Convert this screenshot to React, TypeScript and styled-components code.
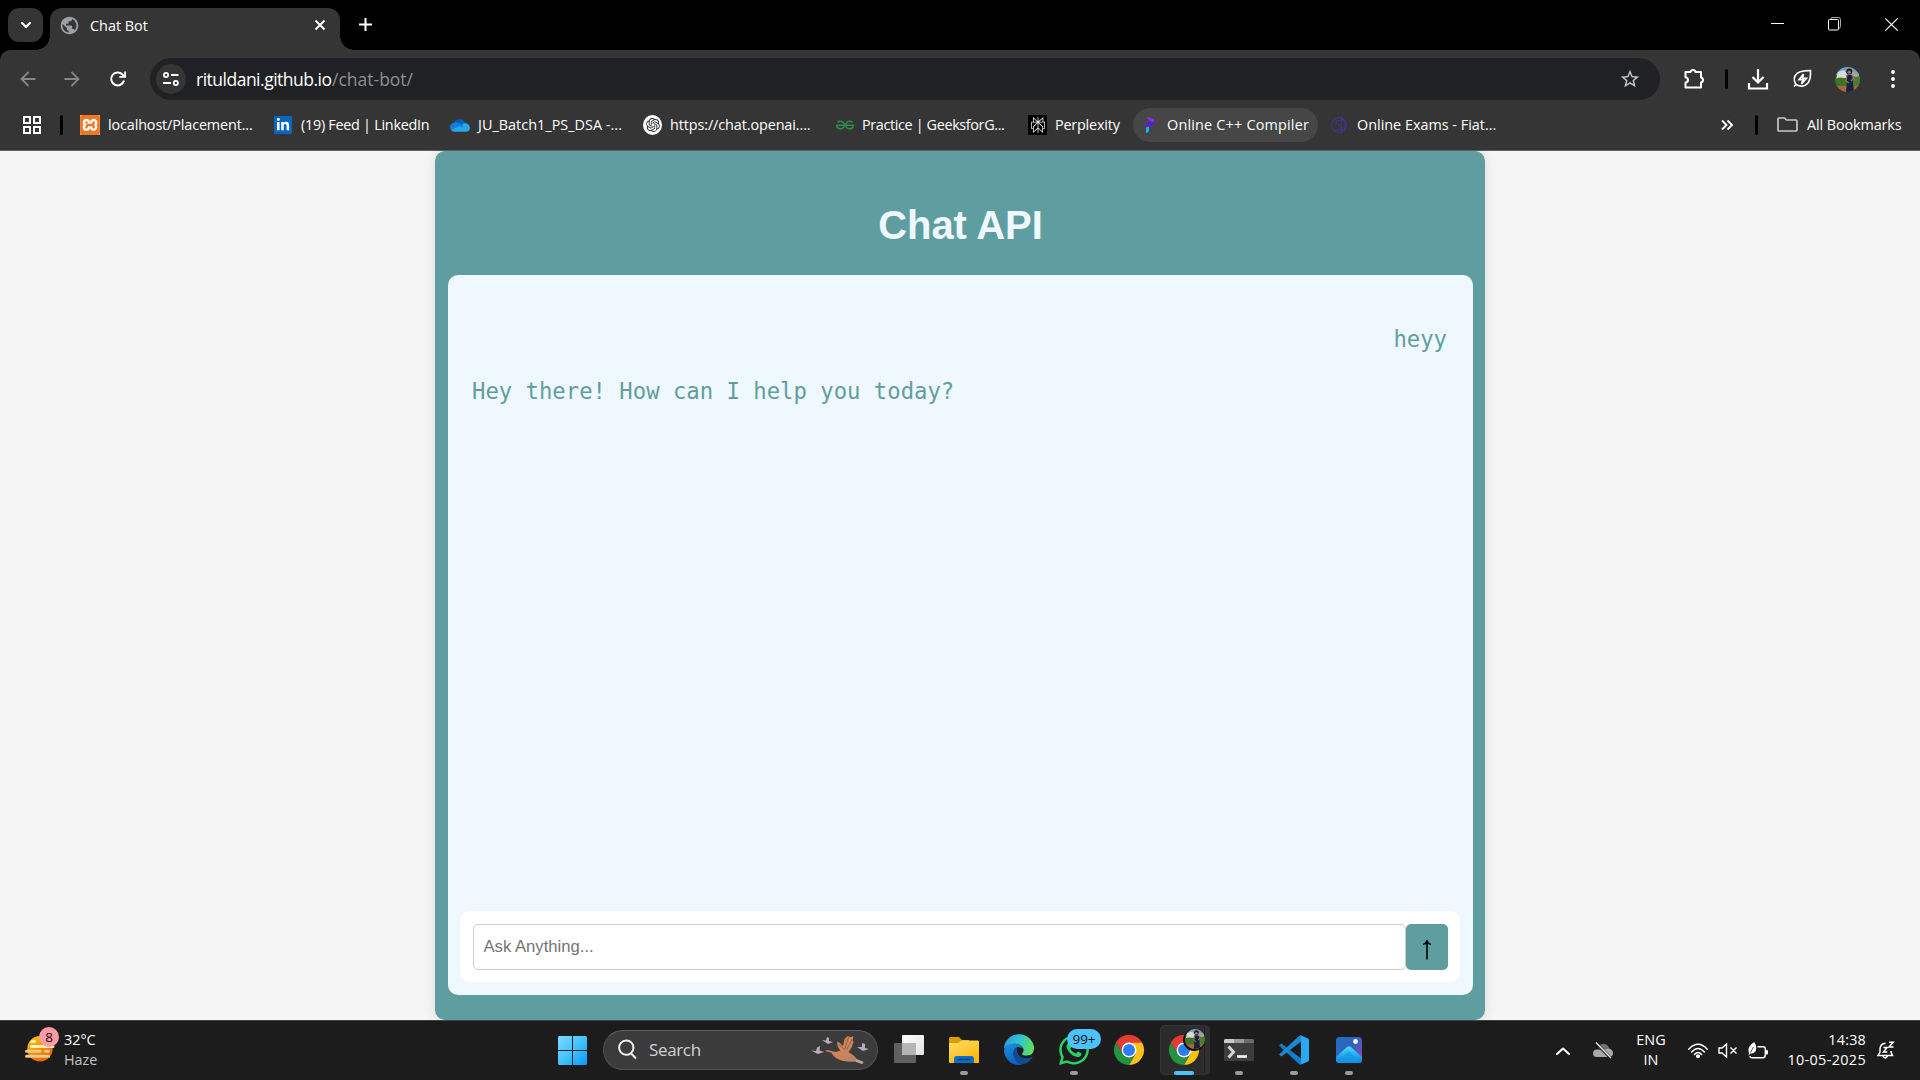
import React from "react";
import styled, { createGlobalStyle } from "styled-components";
import { SiXampp, SiOpenai, SiGeeksforgeeks, SiPerplexity } from "react-icons/si";
import { FaLinkedinIn, FaWhatsapp } from "react-icons/fa";
import { MdPublic, MdStarBorder } from "react-icons/md";

const Global = createGlobalStyle`
  * { box-sizing: border-box; }
  html, body { margin: 0; padding: 0; overflow: hidden; background: #000; }
  svg { display: block; flex: none; overflow: visible; }
`;

const ui = `"Segoe UI", "Open Sans", "Noto Sans", sans-serif`;

const Screen = styled.div`
  width: 1920px;
  height: 1080px;
  display: flex;
  flex-direction: column;
  overflow: hidden;
  font-family: ${ui};
  color: #fff;
`;

/* ---------- shared ---------- */
const Label = styled.span<{ $w?: number; $size?: number; $ls?: number; $color?: string }>`
  flex: none;
  width: ${(p) => (p.$w ? `${p.$w}px` : "auto")};
  font-size: ${(p) => p.$size ?? 14.4}px;
  letter-spacing: ${(p) => p.$ls ?? 0}px;
  color: ${(p) => p.$color ?? "#fff"};
  white-space: nowrap;
  line-height: 20px;
`;
const Slot = styled.span<{ $w: number; $ml?: number; $mr?: number }>`
  flex: none;
  width: ${(p) => p.$w}px;
  margin-left: ${(p) => p.$ml ?? 0}px;
  margin-right: ${(p) => p.$mr ?? 0}px;
  display: flex;
  align-items: center;
  justify-content: center;
`;
const Divider = styled.span<{ $ml: number }>`
  flex: none;
  width: 3px;
  height: 20px;
  border-radius: 2px;
  background: #000;
  margin-left: ${(p) => p.$ml}px;
`;

/* ---------- browser chrome ---------- */
const TabStrip = styled.div`
  height: 50px;
  flex: none;
  background: #000;
  display: flex;
  padding: 8px 0 0 8px;
`;
const TabSearch = styled.div`
  width: 35px;
  height: 34px;
  border-radius: 11px;
  background: #353535;
  display: flex;
  align-items: center;
  justify-content: center;
`;
const Tab = styled.div`
  position: relative;
  margin-left: 7px;
  width: 290px;
  height: 42px;
  border-radius: 12px 12px 0 0;
  background: #353535;
  display: flex;
  align-items: center;
  padding: 0 14px 8px 9px;
  &::before, &::after {
    content: "";
    position: absolute;
    bottom: 0;
    width: 14px;
    height: 14px;
  }
  &::before { left: -14px; background: radial-gradient(circle at 0 0, transparent 13.5px, #353535 14px); }
  &::after { right: -14px; background: radial-gradient(circle at 100% 0, transparent 13.5px, #353535 14px); }
`;
const TabTitle = styled(Label)`
  flex: 1;
  margin-left: 10px;
  padding-top: 1px;
`;
const NewTab = styled.div`
  margin: 10px 0 0 19px;
`;
const WindowControls = styled.div`
  margin-left: auto;
  height: 32px;
  display: flex;
  align-items: center;
  padding-right: 22px;
  gap: 44px;
`;
const ToolbarWrap = styled.div`
  flex: none;
  background: #000;
`;
const Toolbar = styled.div`
  height: 58px;
  border-radius: 10px 10px 0 0;
  background: #353535;
  display: flex;
  align-items: center;
`;
const Omnibox = styled.div`
  margin-left: 19px;
  width: 1510px;
  height: 42px;
  border-radius: 21px;
  background: #202124;
  display: flex;
  align-items: center;
  padding: 0 19px 0 6px;
`;
const SiteInfo = styled.div`
  width: 30px;
  height: 30px;
  border-radius: 50%;
  background: #353535;
  display: flex;
  align-items: center;
  justify-content: center;
  margin-right: 10px;
`;
const Push = styled.span`
  margin-left: auto;
`;
const Bookmarks = styled.div`
  flex: none;
  height: 43px;
  padding-bottom: 9px;
  background: #353535;
  border-bottom: 1px solid #5f5f5f;
  display: flex;
  align-items: center;
`;
const Bookmark = styled.div<{ $w: number; $gap: number; $pad: number; $hover?: boolean }>`
  flex: none;
  width: ${(p) => p.$w}px;
  height: 34px;
  border-radius: 17px;
  padding-left: ${(p) => p.$pad}px;
  gap: ${(p) => p.$gap}px;
  background: ${(p) => (p.$hover ? "#464646" : "transparent")};
  display: flex;
  align-items: center;
`;
const Chip = styled.span<{ $bg: string; $w: number; $h: number; $r?: string }>`
  flex: none;
  width: ${(p) => p.$w}px;
  height: ${(p) => p.$h}px;
  border-radius: ${(p) => p.$r ?? "1px"};
  background: ${(p) => p.$bg};
  display: flex;
  align-items: center;
  justify-content: center;
`;

/* ---------- page ---------- */
const Page = styled.main`
  flex: 1;
  min-height: 0;
  overflow: hidden;
  background: #f5f5f5;
  display: flex;
  justify-content: center;
`;
const Card = styled.section`
  width: 1050px;
  height: 869px;
  border-radius: 10px;
  background: #5f9ea0;
  box-shadow: 0 0 12.5px rgba(0, 0, 0, 0.1);
  padding: 0 12px 25px 13px;
  display: flex;
  flex-direction: column;
  font-family: Arial, "Liberation Sans", sans-serif;
`;
const Title = styled.h1`
  margin: 0;
  height: 124px;
  padding-top: 51px;
  font-size: 40px;
  line-height: 46px;
  text-align: center;
  letter-spacing: -0.1px;
  color: #f0f8ff;
`;
const ChatBox = styled.div`
  flex: 1;
  border-radius: 10px;
  background: #f0f8ff;
  padding: 12px 13px 13px 12px;
  display: flex;
  flex-direction: column;
`;
const Messages = styled.div`
  flex: 1;
  padding: 39px 13px 0 12px;
  display: flex;
  flex-direction: column;
  gap: 26px;
`;
const Message = styled.p<{ $me?: boolean }>`
  margin: 0;
  align-self: ${(p) => (p.$me ? "flex-end" : "flex-start")};
  font-family: "DejaVu Sans Mono", monospace;
  font-size: 22.25px;
  line-height: 26px;
  color: #5f9ea0;
`;
const Composer = styled.form`
  height: 71px;
  border-radius: 10px;
  background: #fff;
  padding: 13px 12px 12px 13px;
  display: flex;
`;
const Input = styled.input`
  flex: 1;
  border: 1px solid #ccc;
  border-radius: 5px;
  padding: 0 9.5px;
  outline: none;
  font: 16.67px Arial, "Liberation Sans", sans-serif;
  &::placeholder { color: #757575; opacity: 1; }
`;
const Send = styled.button`
  width: 42px;
  border: 0;
  border-radius: 5px;
  padding: 4px 0 0;
  background: #5f9ea0;
  display: flex;
  align-items: center;
  justify-content: center;
`;

/* ---------- taskbar ---------- */
const Taskbar = styled.footer`
  flex: none;
  height: 60px;
  background: #1c1c1c;
  border-top: 1px solid #414141;
  display: flex;
  align-items: center;
`;
const Stack = styled.div<{ $align: string; $w: number; $ml: number }>`
  flex: none;
  width: ${(p) => p.$w}px;
  margin-left: ${(p) => p.$ml}px;
  padding-bottom: 2px;
  display: flex;
  flex-direction: column;
  align-items: ${(p) => p.$align};
`;
const Weather = styled.div`
  position: relative;
  margin-left: 25px;
  padding-top: 15px;
  width: 30px;
  height: 60px;
`;
const Badge = styled.span<{ $bg: string; $x: number; $y: number; $w: number; $size: number }>`
  position: absolute;
  left: ${(p) => p.$x}px;
  top: ${(p) => p.$y}px;
  width: ${(p) => p.$w}px;
  height: 20px;
  border-radius: 10px;
  background: ${(p) => p.$bg};
  color: #111;
  font-size: ${(p) => p.$size}px;
  line-height: 20px;
  text-align: center;
`;
const SearchBox = styled.div`
  width: 275px;
  height: 40px;
  margin-left: 16px;
  margin-bottom: 1px;
  border-radius: 20px;
  background: #3b3b3b;
  border: 1px solid #505050;
  border-top-color: #626262;
  display: flex;
  align-items: center;
  padding: 0 8px 0 14px;
`;
const Apps = styled.div`
  margin: 0 0 1px 4px;
  display: flex;
`;
const AppTile = styled.div<{ $active?: boolean }>`
  position: relative;
  width: 44px;
  height: 50px;
  margin-left: ${(p) => (p.$active ? -2 : 0)}px;
  margin-right: ${(p) => (p.$active ? 13 : 11)}px;
  border-radius: 5px;
  padding-top: 10px;
  padding-left: ${(p) => (p.$active ? 4 : 0)}px;
  display: flex;
  justify-content: center;
  background: ${(p) => (p.$active ? "#2b2b2b" : "transparent")};
  box-shadow: ${(p) => (p.$active ? "inset 0 0 0 1px #353535, 1px 0 0 #1c1c1c, 6px 0 0 #303030" : "none")};
`;
const Running = styled.i<{ $active?: boolean }>`
  position: absolute;
  bottom: 0;
  left: ${(p) => (p.$active ? 14 : 18)}px;
  width: ${(p) => (p.$active ? 20 : 8)}px;
  height: 4px;
  border-radius: 2px;
  background: ${(p) => (p.$active ? "#4cc2ff" : "#9a9a9a")};
`;
const ProfileMark = styled.span`
  position: absolute;
  left: 25px;
  top: 4px;
  border-radius: 50%;
  box-shadow: -1px 1px 0 1px #101010;
`;

/* ---------- drawings ---------- */
const Line = ({ w, h, d, sw = 2, color = "#fff", cap = "butt" }: { w: number; h: number; d: string; sw?: number; color?: string; cap?: "butt" | "round" }) => (
  <svg width={w} height={h} viewBox={`0 0 ${w} ${h}`} fill="none" stroke={color} strokeWidth={sw} strokeLinecap={cap} strokeLinejoin={cap === "round" ? "round" : "miter"}>
    <path d={d} />
  </svg>
);

const Chrome = () => (
  <svg width="30" height="30" viewBox="0 0 48 48">
    <path d="M24 24 3.2 12A24 24 0 0 1 44.8 12Z" fill="#e33b2e" />
    <path d="M24 12H44.8A24 24 0 0 1 24 48L34.4 30Z" fill="#fbc116" />
    <path d="M3.2 12 13.6 30A12 12 0 0 0 34.4 30L24 48A24 24 0 0 1 3.2 12Z" fill="#229342" />
    <path d="M3.2 12A24 24 0 0 1 44.8 12H24A12 12 0 0 0 13.6 30Z" fill="#e33b2e" />
    <circle cx="24" cy="24" r="12" fill="#fff" />
    <circle cx="24" cy="24" r="9.6" fill="#2d7cf0" />
  </svg>
);

const Avatar = ({ size, id }: { size: number; id: string }) => (
  <svg width={size} height={size} viewBox="0 0 25 25">
    <defs><clipPath id={id}><circle cx="12.5" cy="12.5" r="12.5" /></clipPath></defs>
    <g clipPath={`url(#${id})`}>
      <rect width="25" height="25" fill="#365b24" />
      <path d="M0 0H25V8H0Z" fill="#6aa0c4" />
      <path d="M3 5 9 3 12 7 11 11 1 12Z" fill="#d9dad8" />
      <path d="M17 4 24 6V11L17 9Z" fill="#a9a09c" />
      <path d="M0 12Q5 9 11 12L12 19 0 20Z" fill="#3c7423" />
      <path d="M17 11 25 9V19H17Z" fill="#4f7d2b" />
      <path d="M0 19H25V25H0Z" fill="#b1633c" />
      <path d="M12 8 17 8 18 15 19 25H11L12 15Z" fill="#14243f" />
      <path d="M12 8 11 14 14 16M17 8 19 11 16 14" stroke="#a5735a" strokeWidth="1.2" fill="none" />
      <circle cx="14.3" cy="4.5" r="3" fill="#2a1b18" />
      <circle cx="14.2" cy="5.2" r="1.6" fill="#a87358" />
    </g>
  </svg>
);

const OneDrive = () => (
  <svg width="20" height="14" viewBox="0 0 20 14">
    <path d="M4 5A6 5.5 0 0 1 14.6 3.5L16 6 10 10 1 8Z" fill="#0a5fb8" />
    <path d="M4.5 4.5A4.7 4.7 0 0 0 1 12L11 9 8.5 5.2Q6.5 4 4.5 4.5Z" fill="#1180dc" />
    <path d="M10 8 14 5.2Q19.5 4.8 20 10 19.5 13.5 16 13.7H4.5Q2 13.7 1 12Z" fill="#28a8ea" />
    <path d="M8.5 5 14 8.2 10.8 9.5Z" fill="#1180dc" />
  </svg>
);

const Programiz = () => (
  <svg width="10" height="16" viewBox="0 0 10 16">
    <path d="M1 0Q9.5 1 9.3 5L6 4.8Q4 2.5 1 0Z" fill="#9430f5" />
    <path d="M9.3 5Q9 8.5 4 9.2L1 11V8Q2 5.2 6 4.8Z" fill="#5e12e8" />
    <path d="M1 10.5 4 9.2V14Q3.5 15.5 1 16Z" fill="#0fb5f2" />
  </svg>
);

const ExamMark = () => (
  <svg width="17" height="20" viewBox="0 0 17 20" fill="none" stroke="#46328a" strokeWidth="1.1">
    <circle cx="8" cy="10" r="7.3" />
    <path d="M10.5 1V19M10 6Q7 4 5.5 6T8 10 9 14 5 14M11 4Q15 6 14 12 13 15 11 16" />
  </svg>
);

const Restore = () => (
  <svg width="13" height="14" viewBox="0 0 13 14" fill="none">
    <path d="M3 2.5V1Q3.5.5 4 .5H10.5Q12.5.5 12.5 2.5V9.5Q12.5 11 11 11" stroke="#aaa" />
    <rect x=".5" y="2.5" width="10" height="10.5" rx="1" stroke="#fff" />
  </svg>
);

const Haze = () => (
  <svg width="30" height="26" viewBox="0 0 30 26">
    <defs><linearGradient id="sun" x2="0.6" y2="1"><stop stopColor="#ffcf08" /><stop offset="1" stopColor="#ee5d08" /></linearGradient></defs>
    <circle cx="15" cy="12.8" r="12.7" fill="url(#sun)" />
    <g strokeWidth="3" strokeLinecap="round" fill="none">
      <path d="M7 5.5H9.5M6.5 10.5H28" stroke="#fff0b0" />
      <path d="M1.5 15.3H15M20.5 15.3H23.5M1.5 20.3H23.5" stroke="#e6cc80" />
    </g>
  </svg>
);

const StartLogo = () => (
  <svg width="29" height="29" viewBox="0 0 29 29">
    <defs><linearGradient id="win" x2="1" y2="1"><stop stopColor="#7bdcff" /><stop offset=".5" stopColor="#43c3fc" /><stop offset="1" stopColor="#0898ff" /></linearGradient></defs>
    <path d="M1 0H14V14H0V1ZM15 0H28L29 1V14H15ZM0 15H14V29H1L0 28ZM15 15H29V28L28 29H15Z" fill="url(#win)" />
  </svg>
);

const Birds = () => (
  <svg width="58" height="30" viewBox="0 0 58 30">
    <defs><linearGradient id="bird" x2="1" y2="1"><stop stopColor="#c47a55" /><stop offset=".5" stopColor="#cf8659" /><stop offset="1" stopColor="#a98074" /></linearGradient></defs>
    <path d="M14 16Q16.500 14 19 15.700L25 17 29.500 15.500Q26 12 26 6.500L29 8 32 11 33.500 4 37 .800 38.500 2 42.500 1.500 41.500 5 42.500 7Q41 13 37.500 17 43 20 46 24L52.500 26.800 51.500 28.800 44 26.500Q33 27.500 27 24 22 21.500 20.500 17.800Z" fill="url(#bird)" />
    <path d="M28 9 33.500 15M37.500 2 34 14M41 4.500 35.500 15" stroke="#8e5548" strokeWidth=".8" />
    <path d="M44 25 52 27.200 51 28.500 45 26.300" fill="#b5a5b8" stroke="#b5a5b8" />
    <g fill="#b8a9bd">
      <path d="M0 15.500 5 16 6 12.500 9 11 8.500 15.500 13 17 7 19Z" />
      <path d="M11 5 15 5.500 16 2 18 3 18 6 22 7 17 9Z" />
      <path d="M46 12 51 12 51 8 54 9 54 13 58 14 52 16Z" />
    </g>
  </svg>
);

const TaskView = () => (
  <svg width="30" height="28" viewBox="0 0 30 28">
    <defs><linearGradient id="tv" x2="1" y2="1"><stop stopColor="#fff" /><stop offset="1" stopColor="#e2e2e2" /></linearGradient></defs>
    <rect y="8" width="22" height="20" rx="1" fill="#606060" />
    <rect x="8" width="22" height="20" rx="1" fill="url(#tv)" />
    <path d="M8 8H22V20H8Z" fill="#b5b5b5" />
  </svg>
);

const Explorer = () => (
  <svg width="30" height="30" viewBox="0 0 30 30">
    <defs><linearGradient id="fold" x2=".6" y2="1"><stop stopColor="#ffdd68" /><stop offset="1" stopColor="#fdb90b" /></linearGradient></defs>
    <path d="M0 3.5Q0 2 1.5 2H10L13 5H20V12H0Z" fill="#dc9c05" />
    <path d="M0 8H9L13 5.5H29Q30 5.5 30 7V28H1Q0 28 0 27Z" fill="url(#fold)" />
    <path d="M5 28V24Q5 21 8 21H22Q25 21 25 24V28Z" fill="#0b6fc8" />
    <path d="M8.5 24.5H21.5" stroke="#053f7c" strokeWidth="1.5" />
  </svg>
);

const Edge = () => (
  <svg width="30" height="30" viewBox="0 0 30 30">
    <defs>
      <linearGradient id="eg1" x1="0" y1=".3" x2="1" y2=".5"><stop stopColor="#2b9fe0" /><stop offset=".5" stopColor="#2fc3d3" /><stop offset="1" stopColor="#62e05b" /></linearGradient>
      <linearGradient id="eg2" x2=".4" y2="1"><stop stopColor="#1b8ede" /><stop offset="1" stopColor="#0b62c4" /></linearGradient>
    </defs>
    <path d="M0 14A15 14.5 0 0 1 30 13.5Q30 20 23 20.5 18 20.7 18 18.5 20 17 19.5 14 17.5 9 10.5 8.8 3 9 0 14Z" fill="url(#eg1)" />
    <path d="M0 15Q1.5 8.8 9.5 8.8 18 9 19.5 14 17 11.7 13.5 12 9 14 9.500 20 11 27 18 29.6 9 31.5 3.5 24.5 0 20 0 15Z" fill="url(#eg2)" />
    <path d="M13.5 12Q9 15 9.5 20 11 28 18 29.6 25 28 28.5 22.5 28.5 21.5 27.5 22 22 24.5 17 22 11.5 18 13.5 12Z" fill="#114b96" />
  </svg>
);

const Terminal = () => (
  <svg width="30" height="30" viewBox="0 0 30 30">
    <rect y="4" width="30" height="22" rx="1.5" fill="#3d3d3d" />
    <path d="M0 8V5.5Q0 4 1.5 4H10V8Z" fill="#c9c9c9" />
    <path d="M10 4H20V8H10Z" fill="#9b9b9b" /><path d="M20 4H28.5Q30 4 30 5.5V8H20Z" fill="#6a6a6a" />
    <path d="M4.5 11.5 9.5 17 4.5 22.5" stroke="#d4d4d4" strokeWidth="3" fill="none" />
    <path d="M13 21.500H23" stroke="#f2f2f2" strokeWidth="2.7" />
  </svg>
);

const VSCode = () => (
  <svg width="30" height="30" viewBox="0 0 30 30">
    <path d="M0 10.5 2.5 8.5 22 23.5V29.5Q21 30 20 29Z" fill="#0f7fc9" />
    <path d="M0 19.5 2.5 21.5 22 6.5V.3Q21 0 20 1Z" fill="#1b8ad3" />
    <path d="M21.5 .2 29 3.5Q30 4 30 5V25Q30 26 29 26.5L21.5 29.8Q22 29.5 22 28V2Q22 .5 21.5 .2Z" fill="#2ca7f2" />
  </svg>
);

const Photos = () => (
  <svg width="26" height="30" viewBox="0 0 26 30">
    <defs>
      <linearGradient id="ph1" x2="1" y2=".7"><stop stopColor="#1e6fc2" /><stop offset=".6" stopColor="#3461bb" /><stop offset="1" stopColor="#7a4fb0" /></linearGradient>
      <linearGradient id="ph2" x2="0" y2="1"><stop stopColor="#49dcff" /><stop offset="1" stopColor="#0c80dc" /></linearGradient>
    </defs>
    <rect y="2" width="26" height="26" rx="3.5" fill="url(#ph1)" />
    <path d="M0 22 11 12Q13 10.5 15 12L26 22V25Q26 28 23 28H3Q0 28 0 25Z" fill="url(#ph2)" />
    <path d="M13 16 24.5 27Q23 28 22 28H3L1 27Z" fill="#1599e8" opacity=".7" />
    <circle cx="19.5" cy="6.5" r="2.4" fill="#fff" />
  </svg>
);

const Wifi = () => (
  <svg width="20" height="16" viewBox="0 0 20 16" fill="none" stroke="#fff" strokeWidth="1.5" strokeLinecap="round">
    <path d="M.8 6.2Q10-3.5 19.2 6.2M3.6 9Q10 1.8 16.4 9M6.4 11.5Q10 7.3 13.6 11.5" />
    <circle cx="10" cy="13.3" r="1.3" fill="#fff" />
  </svg>
);

const Battery = () => (
  <svg width="20" height="17" viewBox="0 0 20 17">
    <path d="M9.500 4.700H15Q17.300 4.700 17.300 6.700V13Q17.300 15.700 15 15.700H4Q2 15.700 2 14" fill="none" stroke="#fff" strokeWidth="1.400" />
    <path d="M17.500 8H19Q20 8 20 9V11.500Q20 12.500 19 12.500H17.500Z" fill="#fff" />
    <path d="M6.300 0Q9.500 5.500 7.500 9.500 5.500 12 2.500 11.500L.500 13.500 1 11Q-1.500 4.500 6.300 0Z" fill="#fff" />
    <path d="M5.500 5 2.500 10.500" stroke="#1c1c1c" strokeWidth=".8" />
  </svg>
);

const CloudOff = () => (
  <svg width="20" height="17" viewBox="0 0 20 17">
    <path d="M5 5Q8 1 12 2 16 3 16 7L8 10Z" fill="#707070" />
    <path d="M4 15Q0 15 0 11.5 0 7.5 4 7.5L9 8 16 6.5Q20 7.5 20 11 20 15 16 15Z" fill="#a9a9a9" />
    <path d="M3 1 18 16.500" stroke="#1c1c1c" strokeWidth="3" /><path d="M3 .5 18 16" stroke="#eee" strokeWidth="1.3" />
  </svg>
);

const Bell = () => (
  <svg width="18" height="19" viewBox="0 0 18 19" fill="none" stroke="#fff" strokeWidth="1.5">
    <path d="M8.500 2.200Q3.300 2.500 3 8V11L1 14.500H15.500L14 11V10M6 15Q8 19 10.500 15" />
    <path d="M6.500 6.500H10L6.500 11H10.300M12 1.200H16.200L12 6H16.500" />
  </svg>
);

/* ---------- data ---------- */
const bookmarks: { label: string; w: number; pad: number; gap: number; ls: number; icon: React.ReactNode; hover?: boolean }[] = [
  { label: "localhost/Placement...", w: 201, pad: 8, gap: 8, ls: -0.13, icon: <Chip $bg="#fff" $w={20} $h={20}><SiXampp size={20} color="#f37623" /></Chip> },
  { label: "(19) Feed | LinkedIn", w: 177, pad: 1, gap: 9, ls: -0.27, icon: <Chip $bg="#0a66c2" $w={18} $h={18}><FaLinkedinIn size={14} color="#fff" /></Chip> },
  { label: "JU_Batch1_PS_DSA -...", w: 193, pad: 0, gap: 8, ls: 0.03, icon: <OneDrive /> },
  { label: "https://chat.openai....", w: 193, pad: 0, gap: 8, ls: -0.1, icon: <Chip $bg="#fff" $w={19} $h={20} $r="50%"><SiOpenai size={14} color="#222" /></Chip> },
  { label: "Practice | GeeksforG...", w: 192, pad: 0, gap: 8, ls: -0.36, icon: <SiGeeksforgeeks size={18} color="#2f8d46" /> },
  { label: "Perplexity", w: 105, pad: 0, gap: 8, ls: -0.2, icon: <Chip $bg="#000" $w={19} $h={20}><SiPerplexity size={16} color="#eee" /></Chip> },
  { label: "Online C++ Compiler", w: 185, pad: 12, gap: 12, ls: 0.2, icon: <Programiz />, hover: true },
  { label: "Online Exams - Fiat...", w: 200, pad: 13, gap: 9, ls: 0, icon: <ExamMark /> },
];

const apps: { id: string; icon: React.ReactNode; running?: boolean; active?: boolean; badge?: string }[] = [
  { id: "tasks", icon: <TaskView /> },
  { id: "explorer", icon: <Explorer />, running: true },
  { id: "edge", icon: <Edge /> },
  { id: "whatsapp", icon: <FaWhatsapp size={34} color="#25d366" style={{ marginTop: -2 }} />, running: true, badge: "99+" },
  { id: "chrome", icon: <Chrome /> },
  { id: "chromeProfile", icon: <Chrome />, running: true, active: true },
  { id: "terminal", icon: <Terminal />, running: true },
  { id: "vscode", icon: <VSCode />, running: true },
  { id: "photos", icon: <Photos />, running: true },
];

export default function App() {
  return (
    <Screen>
      <Global />
      <TabStrip>
        <TabSearch><Line w={12} h={8} d="M2 2 6 6 10 2" cap="round" sw={2.2} /></TabSearch>
        <Tab>
          <MdPublic size={21} color="#9aa0a6" />
          <TabTitle>Chat Bot</TabTitle>
          <Line w={12} h={12} d="M1.5 1.5 10.5 10.5M10.5 1.5 1.5 10.5" sw={1.8} />
        </Tab>
        <NewTab><Line w={13} h={13} d="M6.5 0V13M0 6.5H13" /></NewTab>
        <WindowControls>
          <Line w={13} h={13} d="M0 5.5H13" sw={1} />
          <Restore />
          <Line w={13} h={13} d="M.3 .3 12.7 12.7M12.7 .3 .3 12.7" sw={1.2} />
        </WindowControls>
      </TabStrip>

      <ToolbarWrap>
        <Toolbar>
          <Slot $w={16} $ml={20}><Line w={16} h={16} d="M15.5 8H1.5M8.5 1 1.5 8 8.5 15" color="#868686" sw={1.8} /></Slot>
          <Slot $w={16} $ml={28}><Line w={16} h={16} d="M.5 8H14.5M7.5 1 14.5 8 7.5 15" color="#868686" sw={1.8} /></Slot>
          <Slot $w={16} $ml={30} $mr={5}>
            <svg width="16" height="16" viewBox="0 0 16 16"><path d="M14 9.5A6.500 6.500 0 1 1 12.500 3.500L14.500 5.500" fill="none" stroke="#fff" strokeWidth="2" /><path d="M16 .5V6.7H9.3V4.9H14.2V.5Z" fill="#fff" /></svg>
          </Slot>
          <Omnibox>
            <SiteInfo>
              <svg width="16" height="14" viewBox="0 0 16 14" fill="none" stroke="#fff" strokeWidth="1.8"><circle cx="3" cy="3" r="2.1" /><path d="M8 3H15.5M0 11H8" /><circle cx="12.8" cy="11" r="2.1" /></svg>
            </SiteInfo>
            <Label $size={17.5} $w={136} $ls={-0.5}>rituldani.github.io</Label>
            <Label $size={17.5} $color="#8d8f92">/chat-bot/</Label>
            <Push><MdStarBorder size={22} color="#c7c7c7" /></Push>
          </Omnibox>
          <Slot $w={22} $ml={23}><Line w={22} h={22} d="M2.5 4H7.5Q8 2 10 2T12.5 4H18V9.500Q20 10 20 12T18 14.500V19.500H2.500V14.500Q5 14.300 5 12T2.500 9.300Z" cap="round" /></Slot>
          <Divider $ml={20} />
          <Slot $w={20} $ml={20}><Line w={20} h={21} d="M10 0V13M4.5 8 10 13.5 15.5 8M1 14V19.5H19V14" sw={2.2} /></Slot>
          <Slot $w={20} $ml={24}><Line w={19} h={20} d="M3 15.5Q-1 9 4 4.500 8 1.500 17.500 1.500 18 10 15 14 10 19.500 3 15.500L1 17.500M10.500 5 6 10.800H10L8.500 15 13.500 9.300H9.500Z" sw={1.6} /></Slot>
          <Slot $w={26} $ml={22}><Avatar size={25} id="face" /></Slot>
          <Slot $w={6} $ml={30}><svg width="4" height="18" viewBox="0 0 4 18" fill="#fff"><circle cx="2" cy="2" r="1.9" /><circle cx="2" cy="9" r="1.9" /><circle cx="2" cy="16" r="1.9" /></svg></Slot>
        </Toolbar>
      </ToolbarWrap>

      <Bookmarks>
        <Slot $w={18} $ml={23}><Line w={18} h={18} d="M1 1H7V7H1ZM11 1H17V7H11ZM1 11H7V17H1ZM11 11H17V17H11Z" /></Slot>
        <Divider $ml={19} />
        <Slot $w={9} />
        {bookmarks.map((b) => (
          <Bookmark key={b.label} $w={b.w} $pad={b.pad} $gap={b.gap} $hover={b.hover}>
            {b.icon}
            <Label $ls={b.ls}>{b.label}</Label>
          </Bookmark>
        ))}
        <Slot $w={13} $ml={202}><Line w={12} h={10} d="M1 .5 5.5 5 1 9.5M6.5 .5 11 5 6.5 9.5" sw={1.8} /></Slot>
        <Divider $ml={22} />
        <Slot $w={21} $ml={19}><Line w={21} h={15} d="M1 2Q1 1 2 1H7.5L9.5 3H19Q20 3 20 4V13Q20 14 19 14H2Q1 14 1 13Z" color="#c7c7c7" sw={1.7} /></Slot>
        <Slot $w={9} />
        <Label $ls={-0.1}>All Bookmarks</Label>
      </Bookmarks>

      <Page>
        <Card>
          <Title>Chat API</Title>
          <ChatBox>
            <Messages>
              <Message $me>heyy</Message>
              <Message>Hey there! How can I help you today?</Message>
            </Messages>
            <Composer onSubmit={(e) => e.preventDefault()}>
              <Input placeholder="Ask Anything..." />
              <Send type="submit" aria-label="Send">
                <svg width="10" height="21" viewBox="0 0 10 21"><path d="M5 20.5V2" stroke="#000" strokeWidth="1.6" /><path d="M1 5.500Q4 4 5 1 6 4 9 5.500L5 4.500Z" fill="#000" stroke="#000" strokeWidth=".8" /></svg>
              </Send>
            </Composer>
          </ChatBox>
        </Card>
      </Page>

      <Taskbar>
        <Weather>
          <Haze />
          <Badge $bg="#ff99a4" $x={14} $y={6} $w={20} $size={13.5}>8</Badge>
        </Weather>
        <Stack $align="flex-start" $w={50} $ml={9}>
          <Label>32°C</Label>
          <Label $color="#c4c4c4">Haze</Label>
        </Stack>
        <Slot $w={29} $ml={444}><StartLogo /></Slot>
        <SearchBox>
          <Line w={19} h={20} d="M12.9 13.2A7.2 7.2 0 1 0 2.9 2.9 7.2 7.2 0 0 0 12.9 13.2L18 18.5" color="#eee" sw={2} />
          <Slot $w={12} />
          <Label $size={17} $ls={-0.35} $color="#d2d2d2">Search</Label>
          <Push><Birds /></Push>
        </SearchBox>
        <Slot $w={5} />
        <Apps>
          {apps.map((a) => (
            <AppTile key={a.id} $active={a.active}>
              {a.icon}
              {a.active && <ProfileMark><Avatar size={20} id="taskFace" /></ProfileMark>}
              {a.badge && <Badge $bg="#4cc2ff" $x={15} $y={4} $w={34} $size={13.5}>{a.badge}</Badge>}
              {a.running && <Running $active={a.active} />}
            </AppTile>
          ))}
        </Apps>
        <Slot $w={14} $ml={174}><Line w={14} h={8} d="M1 7 7 1.5 13 7" sw={2} cap="round" /></Slot>
        <Slot $w={20} $ml={23}><CloudOff /></Slot>
        <Stack $align="center" $w={40} $ml={18}><Label>ENG</Label><Label>IN</Label></Stack>
        <Slot $w={20} $ml={17}><Wifi /></Slot>
        <Slot $w={19} $ml={10}><Line w={19} h={15} d="M1 5V10H4L8.5 14V1L4 5ZM12.5 4.5 18.5 10.5M18.5 4.5 12.5 10.5" sw={1.4} /></Slot>
        <Slot $w={20} $ml={11}><Battery /></Slot>
        <Stack $align="flex-end" $w={98} $ml={0}><Label $ls={0.2}>14:38</Label><Label $ls={0.35}>10-05-2025</Label></Stack>
        <Slot $w={18} $ml={11}><Bell /></Slot>
      </Taskbar>
    </Screen>
  );
}
